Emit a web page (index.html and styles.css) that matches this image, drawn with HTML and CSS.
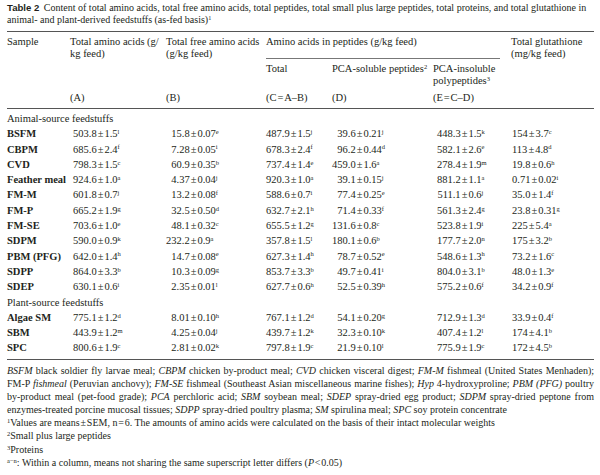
FILE: index.html
```html
<!DOCTYPE html>
<html>
<head>
<meta charset="utf-8">
<link rel="stylesheet" href="styles.css">
</head>
<body>
<div class="page">
  <p class="caption"><span class="cl1"><span class="label">Table 2</span> Content of total amino acids, total free amino acids, total peptides, total small plus large peptides, total proteins, and total glutathione in</span><span class="cl2">animal- and plant-derived feedstuffs (as-fed basis)<sup>1</sup></span></p>
  <table class="tbl">
    <colgroup>
      <col class="c-s"><col class="c-a"><col class="c-b"><col class="c-c"><col class="c-d"><col class="c-e"><col class="c-g">
    </colgroup>
    <thead>
      <tr class="h1">
        <th rowspan="2">Sample</th>
        <th rowspan="2">Total amino acids (g/<br>kg feed)</th>
        <th rowspan="2">Total free amino acids<br>(g/kg feed)</th>
        <th colspan="3" class="grp"><div class="grp-in">Amino acids in peptides (g/kg feed)</div></th>
        <th rowspan="2">Total glutathione<br>(mg/kg feed)</th>
      </tr>
      <tr class="h2">
        <th>Total</th>
        <th>PCA-soluble peptides<sup>2</sup></th>
        <th>PCA-insoluble<br>polypeptides<sup>3</sup></th>
      </tr>
      <tr class="h3">
        <th></th><th>(A)</th><th>(B)</th><th>(C&#8202;=&#8202;A–B)</th><th>(D)</th><th>(E&#8202;=&#8202;C–D)</th><th></th>
      </tr>
    </thead>
    <tbody>
      <tr class="sec first"><td colspan="7">Animal-source feedstuffs</td></tr>
      <tr><th>BSFM</th><td class="a"><span class="n">503.8</span><span class="pm">±</span>1.5<sup>l</sup></td><td class="b"><span class="n">15.8</span><span class="pm">±</span>0.07<sup>e</sup></td><td class="c"><span class="n">487.9</span><span class="pm">±</span>1.5<sup>j</sup></td><td class="d"><span class="n">39.6</span><span class="pm">±</span>0.21<sup>j</sup></td><td class="e"><span class="n">448.3</span><span class="pm">±</span>1.5<sup>k</sup></td><td class="g">154<span class="pm">±</span>3.7<sup>c</sup></td></tr>
      <tr><th>CBPM</th><td class="a"><span class="n">685.6</span><span class="pm">±</span>2.4<sup>f</sup></td><td class="b"><span class="n">7.28</span><span class="pm">±</span>0.05<sup>i</sup></td><td class="c"><span class="n">678.3</span><span class="pm">±</span>2.4<sup>f</sup></td><td class="d"><span class="n">96.2</span><span class="pm">±</span>0.44<sup>d</sup></td><td class="e"><span class="n">582.1</span><span class="pm">±</span>2.6<sup>e</sup></td><td class="g">113<span class="pm">±</span>4.8<sup>d</sup></td></tr>
      <tr><th>CVD</th><td class="a"><span class="n">798.3</span><span class="pm">±</span>1.5<sup>c</sup></td><td class="b"><span class="n">60.9</span><span class="pm">±</span>0.35<sup>b</sup></td><td class="c"><span class="n">737.4</span><span class="pm">±</span>1.4<sup>e</sup></td><td class="d"><span class="n">459.0</span><span class="pm">±</span>1.6<sup>a</sup></td><td class="e"><span class="n">278.4</span><span class="pm">±</span>1.9<sup>m</sup></td><td class="g">19.8<span class="pm">±</span>0.6<sup>h</sup></td></tr>
      <tr><th>Feather meal</th><td class="a"><span class="n">924.6</span><span class="pm">±</span>1.0<sup>a</sup></td><td class="b"><span class="n">4.37</span><span class="pm">±</span>0.04<sup>j</sup></td><td class="c"><span class="n">920.3</span><span class="pm">±</span>1.0<sup>a</sup></td><td class="d"><span class="n">39.1</span><span class="pm">±</span>0.15<sup>j</sup></td><td class="e"><span class="n">881.2</span><span class="pm">±</span>1.1<sup>a</sup></td><td class="g">0.71<span class="pm">±</span>0.02<sup>i</sup></td></tr>
      <tr><th>FM-M</th><td class="a"><span class="n">601.8</span><span class="pm">±</span>0.7<sup>j</sup></td><td class="b"><span class="n">13.2</span><span class="pm">±</span>0.08<sup>f</sup></td><td class="c"><span class="n">588.6</span><span class="pm">±</span>0.7<sup>i</sup></td><td class="d"><span class="n">77.4</span><span class="pm">±</span>0.25<sup>e</sup></td><td class="e"><span class="n">511.1</span><span class="pm">±</span>0.6<sup>j</sup></td><td class="g">35.0<span class="pm">±</span>1.4<sup>f</sup></td></tr>
      <tr><th>FM-P</th><td class="a"><span class="n">665.2</span><span class="pm">±</span>1.9<sup>g</sup></td><td class="b"><span class="n">32.5</span><span class="pm">±</span>0.50<sup>d</sup></td><td class="c"><span class="n">632.7</span><span class="pm">±</span>2.1<sup>h</sup></td><td class="d"><span class="n">71.4</span><span class="pm">±</span>0.33<sup>f</sup></td><td class="e"><span class="n">561.3</span><span class="pm">±</span>2.4<sup>g</sup></td><td class="g">23.8<span class="pm">±</span>0.31<sup>g</sup></td></tr>
      <tr><th>FM-SE</th><td class="a"><span class="n">703.6</span><span class="pm">±</span>1.0<sup>e</sup></td><td class="b"><span class="n">48.1</span><span class="pm">±</span>0.32<sup>c</sup></td><td class="c"><span class="n">655.5</span><span class="pm">±</span>1.2<sup>g</sup></td><td class="d"><span class="n">131.6</span><span class="pm">±</span>0.8<sup>c</sup></td><td class="e"><span class="n">523.8</span><span class="pm">±</span>1.9<sup>i</sup></td><td class="g">225<span class="pm">±</span>5.4<sup>a</sup></td></tr>
      <tr><th>SDPM</th><td class="a"><span class="n">590.0</span><span class="pm">±</span>0.9<sup>k</sup></td><td class="b"><span class="n">232.2</span><span class="pm">±</span>0.9<sup>a</sup></td><td class="c"><span class="n">357.8</span><span class="pm">±</span>1.5<sup>l</sup></td><td class="d"><span class="n">180.1</span><span class="pm">±</span>0.6<sup>b</sup></td><td class="e"><span class="n">177.7</span><span class="pm">±</span>2.0<sup>n</sup></td><td class="g">175<span class="pm">±</span>3.2<sup>b</sup></td></tr>
      <tr><th>PBM (PFG)</th><td class="a"><span class="n">642.0</span><span class="pm">±</span>1.4<sup>h</sup></td><td class="b"><span class="n">14.7</span><span class="pm">±</span>0.08<sup>e</sup></td><td class="c"><span class="n">627.3</span><span class="pm">±</span>1.4<sup>h</sup></td><td class="d"><span class="n">78.7</span><span class="pm">±</span>0.52<sup>e</sup></td><td class="e"><span class="n">548.6</span><span class="pm">±</span>1.3<sup>h</sup></td><td class="g">73.2<span class="pm">±</span>1.6<sup>c</sup></td></tr>
      <tr><th>SDPP</th><td class="a"><span class="n">864.0</span><span class="pm">±</span>3.3<sup>b</sup></td><td class="b"><span class="n">10.3</span><span class="pm">±</span>0.09<sup>g</sup></td><td class="c"><span class="n">853.7</span><span class="pm">±</span>3.3<sup>b</sup></td><td class="d"><span class="n">49.7</span><span class="pm">±</span>0.41<sup>i</sup></td><td class="e"><span class="n">804.0</span><span class="pm">±</span>3.1<sup>b</sup></td><td class="g">48.0<span class="pm">±</span>1.3<sup>e</sup></td></tr>
      <tr><th>SDEP</th><td class="a"><span class="n">630.1</span><span class="pm">±</span>0.6<sup>i</sup></td><td class="b"><span class="n">2.35</span><span class="pm">±</span>0.01<sup>l</sup></td><td class="c"><span class="n">627.7</span><span class="pm">±</span>0.6<sup>h</sup></td><td class="d"><span class="n">52.5</span><span class="pm">±</span>0.39<sup>h</sup></td><td class="e"><span class="n">575.2</span><span class="pm">±</span>0.6<sup>f</sup></td><td class="g">34.2<span class="pm">±</span>0.9<sup>f</sup></td></tr>
      <tr class="sec"><td colspan="7">Plant-source feedstuffs</td></tr>
      <tr><th>Algae SM</th><td class="a"><span class="n">775.1</span><span class="pm">±</span>1.2<sup>d</sup></td><td class="b"><span class="n">8.01</span><span class="pm">±</span>0.10<sup>h</sup></td><td class="c"><span class="n">767.1</span><span class="pm">±</span>1.2<sup>d</sup></td><td class="d"><span class="n">54.1</span><span class="pm">±</span>0.20<sup>g</sup></td><td class="e"><span class="n">712.9</span><span class="pm">±</span>1.3<sup>d</sup></td><td class="g">33.9<span class="pm">±</span>0.4<sup>f</sup></td></tr>
      <tr><th>SBM</th><td class="a"><span class="n">443.9</span><span class="pm">±</span>1.2<sup>m</sup></td><td class="b"><span class="n">4.25</span><span class="pm">±</span>0.04<sup>j</sup></td><td class="c"><span class="n">439.7</span><span class="pm">±</span>1.2<sup>k</sup></td><td class="d"><span class="n">32.3</span><span class="pm">±</span>0.10<sup>k</sup></td><td class="e"><span class="n">407.4</span><span class="pm">±</span>1.2<sup>l</sup></td><td class="g">174<span class="pm">±</span>4.1<sup>b</sup></td></tr>
      <tr class="last"><th>SPC</th><td class="a"><span class="n">800.6</span><span class="pm">±</span>1.9<sup>c</sup></td><td class="b"><span class="n">2.81</span><span class="pm">±</span>0.02<sup>k</sup></td><td class="c"><span class="n">797.8</span><span class="pm">±</span>1.9<sup>c</sup></td><td class="d"><span class="n">21.9</span><span class="pm">±</span>0.10<sup>l</sup></td><td class="e"><span class="n">775.9</span><span class="pm">±</span>1.9<sup>c</sup></td><td class="g">172<span class="pm">±</span>4.5<sup>b</sup></td></tr>
    </tbody>
  </table>
  <div class="notes">
    <p class="abbr">
      <span class="jl"><i>BSFM</i> black soldier fly larvae meal; <i>CBPM</i> chicken by-product meal; <i>CVD</i> chicken visceral digest; <i>FM-M</i> fishmeal (United States Menhaden);</span>
      <span class="jl">FM-P <i>fishmeal</i> (Peruvian anchovy); <i>FM-SE</i> fishmeal (Southeast Asian miscellaneous marine fishes); <i>Hyp</i> 4-hydroxyproline; <i>PBM (PFG)</i> poultry</span>
      <span class="jl">by-product meal (pet-food grade); <i>PCA</i> perchloric acid; <i>SBM</i> soybean meal; <i>SDEP</i> spray-dried egg product; <i>SDPM</i> spray-dried peptone from</span>
      <span class="ll">enzymes-treated porcine mucosal tissues; <i>SDPP</i> spray-dried poultry plasma; <i>SM</i> spirulina meal; <i>SPC</i> soy protein concentrate</span>
    </p>
    <p class="fn"><sup>1</sup>Values are means&#8202;±&#8202;SEM, n&#8202;=&#8202;6. The amounts of amino acids were calculated on the basis of their intact molecular weights</p>
    <p class="fn"><sup>2</sup>Small plus large peptides</p>
    <p class="fn"><sup>3</sup>Proteins</p>
    <p class="fn"><sup>a−n</sup>: Within a column, means not sharing the same superscript letter differs (<i>P</i>&#8202;&lt;&#8202;0.05)</p>
  </div>
</div>
</body>
</html>
```

FILE: styles.css
```css
html, body {
  margin: 0;
  padding: 0;
  background: #ffffff;
}

body {
  font-family: "Liberation Serif", "Times New Roman", serif;
  color: #231f20;
}

.page {
  width: 587px;
  padding: 2px 0 0 7px;
}

.caption {
  margin: 0;
  font-size: 10px;
  line-height: 12px;
}

.cl1 {
  display: block;
  white-space: nowrap;
}

.cl2 {
  display: block;
}

.caption .label {
  font-family: "Liberation Sans", Arial, sans-serif;
  font-weight: bold;
  font-size: 9.6px;
  margin-right: 2px;
}

sup {
  font-size: 0.62em;
  line-height: 0;
  vertical-align: baseline;
  position: relative;
  top: -0.5em;
}

.tbl {
  margin-top: 5px;
  width: 587px;
  border-collapse: collapse;
  table-layout: fixed;
  font-size: 10.5px;
  border-top: 1.3px solid #555;
  border-bottom: 1.3px solid #555;
}

.c-s { width: 63px; }
.c-a { width: 96px; }
.c-b { width: 100px; }
.c-c { width: 66px; }
.c-d { width: 101px; }
.c-e { width: 78px; }
.c-g { width: 83px; }

.tbl th,
.tbl td {
  padding: 0;
  text-align: left;
  vertical-align: top;
  font-weight: normal;
  white-space: nowrap;
}

.tbl thead th {
  line-height: 12px;
}

.tbl .h1 th {
  padding-top: 4px;
}

.grp-in {
  border-bottom: 1px solid #777;
  margin-right: 11px;
  padding-bottom: 10px;
}

.tbl .h2 th {
  padding-top: 4px;
}

.tbl .h3 th {
  padding-top: 5px;
  padding-bottom: 4px;
  border-bottom: 1.3px solid #555;
}

.tbl tbody td,
.tbl tbody th {
  line-height: 15.3px;
  height: 15.3px;
}

.tbl .first td {
  padding-top: 2px;
}

.tbl tbody th {
  font-weight: bold;
}

.tbl .last th,
.tbl .last td {
  padding-bottom: 3px;
}

.n {
  display: inline-block;
  width: 2.25em;
  text-align: right;
}

.pm {
  margin: 0 1px;
}

.tbl td.a { padding-left: 3px; }
.tbl td.e { padding-left: 4px; }
.tbl td.g { padding-left: 1px; }

.notes {
  font-size: 10px;
  padding-top: 4px;
}

.abbr {
  margin: 0;
  line-height: 13px;
}

.jl {
  display: block;
  text-align: justify;
  text-align-last: justify;
}

.ll {
  display: block;
}

.fn {
  margin: 1px 0 0 0;
  line-height: 12.5px;
}

.fn sup {
  font-size: 0.65em;
}
```
